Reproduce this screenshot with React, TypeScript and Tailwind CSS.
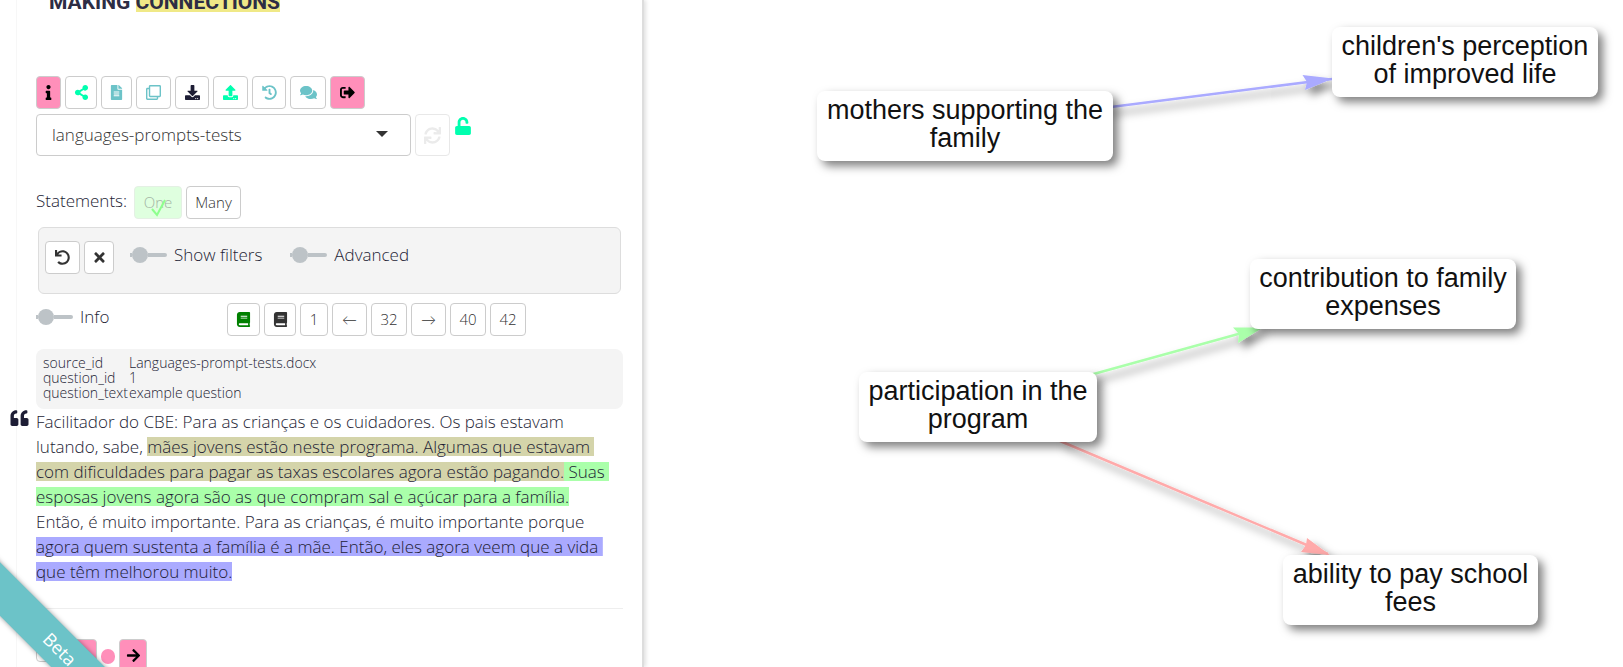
import type { ReactNode } from "react";
import {
  FaArrowRight,
  FaBook,
  FaComments,
  FaDownload,
  FaFileAlt,
  FaHistory,
  FaInfo,
  FaQuoteLeft,
  FaRegClone,
  FaShareAlt,
  FaSignOutAlt,
  FaSync,
  FaTimes,
  FaUndo,
  FaUnlock,
  FaUpload,
} from "react-icons/fa";

function Btn({ label, className, children }: { label?: string; className: string; children: ReactNode }) {
  return (
    <button
      type="button"
      aria-label={label}
      className={`flex h-[33px] shrink-0 items-center justify-center rounded border text-[15px] ${className}`}
    >
      {children}
    </button>
  );
}

function Toggle({ text, className = "" }: { text: string; className?: string }) {
  return (
    <label className={`flex items-center gap-[7px] ${className}`}>
      <input type="checkbox" className="sr-only" />
      <span className="flex w-[37px] items-center">
        <span className="h-1 w-[2px] bg-[#bdc3c7]" />
        <span className="h-4 w-4 rounded-full bg-[#bdc3c7]" />
        <span className="h-1 flex-1 rounded-r bg-[#bdc3c7]" />
      </span>
      <span>{text}</span>
    </label>
  );
}

function Toolbar() {
  return (
    <div className="flex gap-1">
      <Btn label="About" className="w-[25px] border-[#cccccc] bg-[#ff8fba] text-black"><FaInfo /></Btn>
      <Btn label="Share" className="w-8 border-[#cccccc] bg-white text-[#00ffaf]"><FaShareAlt /></Btn>
      <Btn label="Document" className="w-[31px] border-[#cccccc] bg-white text-[#6cc3c8]"><FaFileAlt /></Btn>
      <Btn label="Clone" className="w-[35px] border-[#cccccc] bg-white text-[#6cc3c8]"><FaRegClone /></Btn>
      <Btn label="Download" className="w-[34px] border-[#cccccc] bg-white text-[#1d1d35]"><FaDownload /></Btn>
      <Btn label="Upload" className="w-[35px] border-[#cccccc] bg-white text-[#00ffaf]"><FaUpload /></Btn>
      <Btn label="History" className="w-[34px] border-[#cccccc] bg-white text-[#6cc3c8]"><FaHistory /></Btn>
      <Btn label="Comments" className="w-9 border-[#cccccc] bg-white text-[#6cc3c8]"><FaComments className="text-[17px]" /></Btn>
      <Btn label="Sign out" className="w-[35px] border-[#cccccc] bg-[#ff8fba] text-black"><FaSignOutAlt /></Btn>
    </div>
  );
}

function FilePicker() {
  return (
    <div className="mt-[5px] flex gap-1">
      <div className="relative w-[375px]">
        <select
          aria-label="File"
          className="h-[42px] w-full appearance-none rounded border border-[#cccccc] bg-white px-[15px] text-[#333333]"
        >
          <option>languages-prompts-tests</option>
        </select>
        <svg viewBox="0 0 12 6" className="pointer-events-none absolute top-[17px] right-[23px] h-[6px] w-3 fill-[#333333]">
          <path d="M0 0h12L6 6z" />
        </svg>
      </div>
      <button
        type="button"
        aria-label="Refresh"
        className="flex h-[42px] w-[35px] items-center justify-center rounded border border-[#e8e8e8] text-[17px] text-[#ebebeb]"
      >
        <FaSync />
      </button>
      <FaUnlock className="mt-[3px] text-[18px] text-[#00ffaf]" />
    </div>
  );
}

function Statements() {
  return (
    <div className="mt-[30px] flex gap-1">
      <span className="w-[94px] leading-[29px] whitespace-nowrap">Statements:</span>
      <Btn className="relative w-12 border-[#e4f0e4] bg-[#dfffdf] text-[#a3b5a5]">
        One
        <svg viewBox="0 0 16 18" className="absolute top-3 left-4 h-[18px] w-4 fill-none stroke-[#8dff8d] stroke-2">
          <path d="M1 10l5 6L14 1" />
        </svg>
      </Btn>
      <Btn className="w-[55px] border-[#cccccc] bg-white text-[#333333]">Many</Btn>
    </div>
  );
}

function Filters() {
  return (
    <div className="mx-[2px] mt-2 flex h-[67px] items-start rounded-md border border-[#dddddd] bg-[#f4f4f4] pt-[13px] pl-[6px]">
      <Btn label="Reset" className="mr-1 w-[35px] border-[#cccccc] bg-white text-[#333333]"><FaUndo /></Btn>
      <Btn label="Clear" className="w-[30px] border-[#cccccc] bg-white text-[#333333]"><FaTimes /></Btn>
      <Toggle text="Show filters" className="ml-4 h-[27px]" />
      <Toggle text="Advanced" className="ml-[28px] h-[27px]" />
    </div>
  );
}

function Pager() {
  return (
    <div className="mt-[9px] flex gap-1">
      <Toggle text="Info" className="h-[27px] w-[187px]" />
      <Btn label="First chapter" className="w-[33px] border-[#cccccc] bg-white text-[#008000]"><FaBook /></Btn>
      <Btn label="Chapter" className="w-8 border-[#cccccc] bg-white text-[#333333]"><FaBook /></Btn>
      <Btn className="w-7 border-[#cccccc] bg-white text-[#333333]">1</Btn>
      <Btn className="w-[35px] border-[#cccccc] bg-white font-['Lato',sans-serif] text-[#333333]">←</Btn>
      <Btn className="w-9 border-[#cccccc] bg-white text-[#333333]">32</Btn>
      <Btn className="w-[35px] border-[#cccccc] bg-white font-['Lato',sans-serif] text-[#333333]">→</Btn>
      <Btn className="w-9 border-[#cccccc] bg-white text-[#333333]">40</Btn>
      <Btn className="w-9 border-[#cccccc] bg-white text-[#333333]">42</Btn>
    </div>
  );
}

const meta = [
  ["source_id", "Languages-prompt-tests.docx"],
  ["question_id", "1"],
  ["question_text", "example question"],
];

function Metadata() {
  return (
    <div className="mt-[13px] rounded-lg bg-[#f4f4f4] px-[7px] pt-[6px] pb-[9px]">
      <table className="w-full table-fixed border-collapse text-left text-[14px] leading-[15px]">
        <tbody>
          {meta.map(([key, value]) => (
            <tr key={key}>
              <th className="w-[86px] p-0 font-light whitespace-nowrap">{key}</th>
              <td className="p-0">{value}</td>
            </tr>
          ))}
        </tbody>
      </table>
    </div>
  );
}

function Highlight({ className, children }: { className: string; children: ReactNode }) {
  return (
    <mark className={`bg-transparent bg-linear-to-r bg-[length:100%_19px] bg-center bg-no-repeat box-decoration-clone text-inherit ${className}`}>
      {children}
    </mark>
  );
}

function Quote() {
  return (
    <div className="-ml-[26px] flex items-start gap-[7px]">
      <FaQuoteLeft className="w-[19px] shrink-0 text-[18px] text-[#1d1d35]" />
      <p className="leading-[25px] whitespace-nowrap">
        Facilitador do CBE: Para as crianças e os cuidadores. Os pais estavam
        <br />
        lutando, sabe,{" "}
        <Highlight className="from-[#d4d4aa] to-[#d4d4aa]">
          mães jovens estão neste programa. Algumas que estavam&nbsp;
          <br />
          com dificuldades para pagar as taxas escolares agora estão pagando.
        </Highlight>
        <Highlight className="from-[#aaffaa] to-[#aaffaa]">
          {" "}Suas&nbsp;
          <br />
          esposas jovens agora são as que compram sal e açúcar para a família.
        </Highlight>
        <br />
        Então, é muito importante. Para as crianças, é muito importante porque
        <br />
        <Highlight className="from-[#aaaaff] to-[#aaaaff]">
          agora quem sustenta a família é a mãe. Então, eles agora veem que a vida&nbsp;
          <br />
          que têm melhorou muito.
        </Highlight>
      </p>
    </div>
  );
}

function Sidebar() {
  return (
    <aside className="relative z-10 overflow-hidden border-r-2 border-[#dddddd] pr-[19px] pl-4 shadow-[2px_0_4px_rgba(0,0,0,0.12)]">
      <div className="flex min-h-full flex-col border-l border-[#f7f7f7] pl-[19px]">
        <header className="flex h-3 items-end pl-[13px]">
          <h1 className="font-['Roboto',sans-serif] text-[21px] leading-[20px] font-bold whitespace-nowrap text-[#2d2d44]">
            MAKING <span className="inline-block bg-[#f0e987]">CONNECTIONS</span>
          </h1>
        </header>
        <div className="mt-16">
          <Toolbar />
          <FilePicker />
          <Statements />
          <Filters />
          <Pager />
          <Metadata />
          <Quote />
        </div>
        <hr className="mt-[24px] border-[#eeeeee]" />
        <div className="mt-[30px] flex items-start">
          <span className="h-[23px] w-[26px] rounded border border-[#cccccc]" />
          <Btn label="Previous" className="w-[35px] border-[#cccccc] bg-[#ff8fba] text-black"><FaArrowRight className="rotate-180" /></Btn>
          <span className="mt-[10px] ml-1 h-[15px] w-[14px] rounded-full bg-[#ff8fba]" />
          <Btn label="Next" className="ml-1 w-7 border-[#cccccc] bg-[#ff8fba] text-black"><FaArrowRight /></Btn>
        </div>
      </div>
      <div className="absolute -bottom-[1px] -left-[90px] flex h-[38px] w-[300px] rotate-45 items-center justify-center bg-[#6cc3c8] text-[18px] font-normal text-white shadow-[0_0_5px_rgba(0,0,0,0.4)]">
        Beta
      </div>
    </aside>
  );
}

function Node({ className, children }: { className: string; children: ReactNode }) {
  return (
    <div
      className={`absolute h-[70px] rounded-lg bg-white pt-[5px] text-center font-['Liberation_Sans',Arial,sans-serif] text-[27px] leading-[28px] font-normal whitespace-nowrap text-[#111111] shadow-[5px_5px_10px_rgba(0,0,0,0.5)] ${className}`}
    >
      {children}
    </div>
  );
}

function CausalMap() {
  return (
    <main className="relative overflow-hidden">
      <svg viewBox="2 0 981 667" className="absolute top-0 left-0 h-[667px] w-[981px]">
        <defs>
          <filter id="edge-shadow" x="-10%" y="-30%" width="130%" height="180%">
            <feDropShadow dx="5" dy="6" stdDeviation="4" floodColor="#000000" floodOpacity="0.5" />
          </filter>
        </defs>
        <g filter="url(#edge-shadow)" stroke="#aaaaff" fill="#aaaaff">
          <path d="M465 107.500L690 79" strokeWidth="2.500" />
          <path d="M691 78.500L660.500 75L665 82L663 90z" stroke="none" />
        </g>
        <g filter="url(#edge-shadow)" stroke="#aaffaa" fill="#aaffaa">
          <path d="M448 375L618 328" strokeWidth="2.500" />
          <path d="M621 327.500L591 327.500L597 334L596 343z" stroke="none" />
        </g>
        <g filter="url(#edge-shadow)" stroke="#ffaaaa" fill="#ffaaaa">
          <path d="M418 441L686 554" strokeWidth="2.500" />
          <path d="M688 555L665 538L664 545L659 552z" stroke="none" />
        </g>
      </svg>
      <Node className="top-[91px] left-[173px] w-[296px]">mothers supporting the<br />family</Node>
      <Node className="top-[27px] left-[688px] w-[266px]">children's perception<br />of improved life</Node>
      <Node className="top-[259px] left-[606px] w-[266px]">contribution to family<br />expenses</Node>
      <Node className="top-[372px] left-[215px] w-[238px]">participation in the<br />program</Node>
      <Node className="top-[555px] left-[639px] w-[255px]">ability to pay school<br />fees</Node>
    </main>
  );
}

export default function App() {
  return (
    <div className="grid h-screen grid-cols-[644fr_979fr] overflow-hidden bg-white font-['Open_Sans',sans-serif] text-[17px] font-light text-[#1d1d35]">
      <Sidebar />
      <CausalMap />
    </div>
  );
}
